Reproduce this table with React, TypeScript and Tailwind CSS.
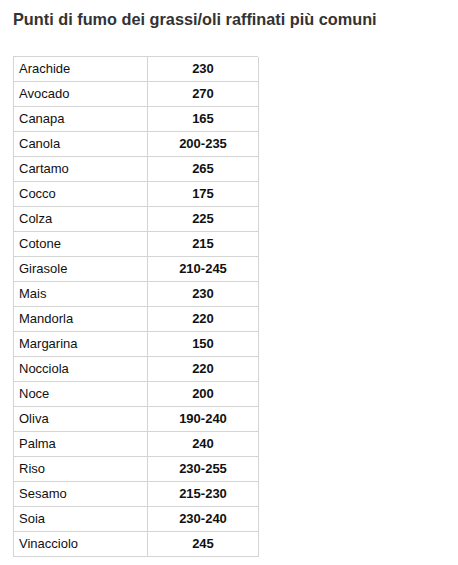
import React from "react";

const rows: [string, string][] = [
  ["Arachide", "230"],
  ["Avocado", "270"],
  ["Canapa", "165"],
  ["Canola", "200-235"],
  ["Cartamo", "265"],
  ["Cocco", "175"],
  ["Colza", "225"],
  ["Cotone", "215"],
  ["Girasole", "210-245"],
  ["Mais", "230"],
  ["Mandorla", "220"],
  ["Margarina", "150"],
  ["Nocciola", "220"],
  ["Noce", "200"],
  ["Oliva", "190-240"],
  ["Palma", "240"],
  ["Riso", "230-255"],
  ["Sesamo", "215-230"],
  ["Soia", "230-240"],
  ["Vinacciolo", "245"],
];

export default function App() {
  return (
    <div className="w-[458px] h-[565px] bg-white font-['Liberation_Sans',Arial,sans-serif]">
      <div className="px-[13px] pt-[9px]">
        <h1 className="text-[16.3px] leading-[20px] font-bold text-[#333333]">
          Punti di fumo dei grassi/oli raffinati più comuni
        </h1>
        <div className="mt-[27px] w-[245px] border-t border-l border-[#d4d4d4]">
          {rows.map(([name, val]) => (
            <div key={name} className="grid grid-cols-[134px_111px] h-[25px]">
              <div className="border-r border-b border-[#d4d4d4] pl-[5px] text-[13px] leading-[24px] text-[#111111]">
                {name}
              </div>
              <div className="border-r border-b border-[#d4d4d4] text-center text-[13px] leading-[24px] font-bold text-[#111111]">
                {val}
              </div>
            </div>
          ))}
        </div>
      </div>
    </div>
  );
}
